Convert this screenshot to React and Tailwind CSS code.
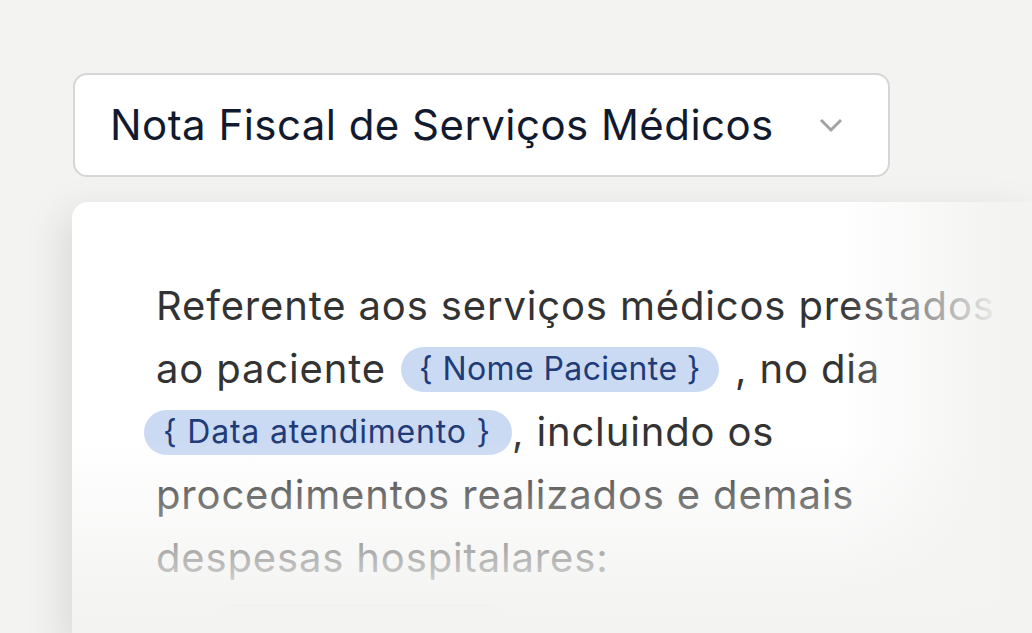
import React from "react";

function Chip({ children, className = "" }) {
  return (
    <span
      className={
        "inline-flex h-[45px] -translate-y-[3px] items-center rounded-full bg-[#cbdaf3] align-middle text-[32px] leading-none tracking-[0.4px] text-[#1f3b78] " +
        className
      }
    >
      {children}
    </span>
  );
}

export default function App() {
  return (
    <div
      className="h-[633px] w-[1032px] overflow-hidden bg-[#f3f3f2] pl-[73px] pt-[73px]"
      style={{ fontFamily: "Inter, 'Noto Sans', sans-serif" }}
    >
      <div className="flex h-[104px] w-[817px] items-center justify-between rounded-[14px] border-2 border-[#d6d6d6] bg-white pl-[35px] pr-[44px]">
        <span className="text-[42px] leading-none tracking-[0.45px] text-[#111a2e]">
          Nota Fiscal de Serviços Médicos
        </span>
        <svg width="26" height="16" viewBox="0 0 26 16" fill="none">
          <path d="M3 3l10 10L23 3" stroke="#a3a3a3" strokeWidth="3" />
        </svg>
      </div>

      <div className="relative ml-[-1px] mt-[25px] h-[440px] w-[960px] rounded-tl-[16px] bg-white pl-[84px] pt-[72px] shadow-[-10px_10px_40px_rgba(0,0,0,0.1)]">
        <div className="text-[40px] leading-[63px] tracking-[0.85px] text-[#333333]">
          <div className="whitespace-nowrap">Referente aos serviços médicos prestados</div>
          <div className="whitespace-nowrap">
            ao paciente <Chip className="ml-[3px] mr-[4px] px-[18px]">{"{ Nome Paciente }"}</Chip> , no dia
          </div>
          <div className="whitespace-nowrap">
            <Chip className="ml-[-12px] pl-[19px] pr-[21px] tracking-[0.8px]">{"{ Data atendimento }"}</Chip>, incluindo os
          </div>
          <div className="whitespace-nowrap">procedimentos realizados e demais</div>
          <div className="whitespace-nowrap">despesas hospitalares:</div>
          <div className="whitespace-nowrap">
            <span className="ml-[60px] inline-block h-[40px] w-[290px] rounded-full bg-[#d8d8d8] align-middle" />
          </div>
        </div>
        <div className="pointer-events-none absolute inset-0 bg-[linear-gradient(to_right,rgba(243,243,242,0)_80%,#f3f3f2_97%)]" />
        <div className="pointer-events-none absolute inset-0 bg-[linear-gradient(to_bottom,rgba(243,243,242,0)_54%,#f3f3f2_94%)]" />
      </div>
    </div>
  );
}
